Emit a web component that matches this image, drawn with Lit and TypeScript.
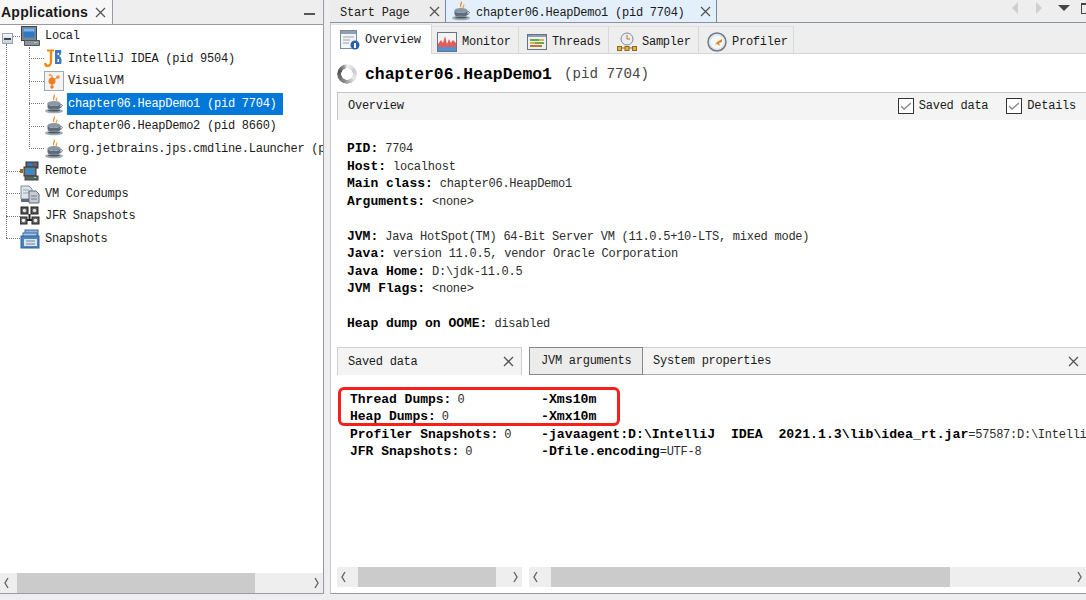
import { LitElement, html, svg, css } from 'lit';
import { customElement } from 'lit/decorators.js';

// Small 20x20 icons, drawn by hand
const cup = svg`
  <path d="M10 0c2.500 2.500-1 4 .5 7C7.500 5 10 3 10 0z" fill="#e8821e"/>
  <path d="M13 2.500c1 2.500-.5 3.500-.5 5.500-2-1.500 0-3.500.5-5.500z" fill="#f0a040"/>
  <ellipse cx="10" cy="9.500" rx="6.500" ry="2.400" fill="#8a97a6"/>
  <path d="M3.500 9.500v3.500c0 2 3 3 6.500 3s6.500-1 6.500-3V9.500c-1 2-3.500 2.500-6.500 2.500S4.500 11.500 3.500 9.500z" fill="#5f6b78"/>
  <path d="M16.500 10.500c2.500-.5 2.500 2.500-.5 3" fill="none" stroke="#5f6b78"/>
  <ellipse cx="10" cy="17" rx="9" ry="2.300" fill="#a0abb6"/>
  <ellipse cx="10" cy="16.500" rx="6" ry="1.100" fill="#4e5863"/>`;

const icons: Record<string, unknown> = {
  computer: svg`
    <rect x="1.500" y="0.500" width="15" height="14" fill="#7b8590" stroke="#3f454c"/>
    <rect x="3.500" y="2.500" width="11" height="9" fill="#2f78c4"/>
    <rect x="3.500" y="2.500" width="11" height="3" fill="#7fb2e6"/>
    <path d="M4.500 14.500h15v5h-15z" fill="#8b959f" stroke="#4f5660"/>
    <rect x="14" y="16" width="3" height="1" fill="#9fdc6a"/>`,
  idea: svg`
    <path d="M7 1v11c0 3-1.500 5-3 5S1 16 1.500 14" fill="none" stroke="#ee8a12" stroke-width="2.500"/>
    <path d="M3 1.500h7" stroke="#ee8a12" stroke-width="2"/>
    <path d="M11 1h6c1 2 0 5-2 6 3 1 3 5 2 8h-6V1z" fill="#3f78c8"/>
    <path d="M13.500 4h1.500v2h-1.500zM13.500 10h1.500v3h-1.500z" fill="#fff"/>`,
  visualvm: svg`
    <rect x="0.500" y="0.500" width="19" height="19" fill="#f3f3f3" stroke="#9fa9b5"/>
    <circle cx="8" cy="10" r="3.500" fill="#ef7d22"/>
    <circle cx="14" cy="6" r="1.800" fill="#f0944a"/>
    <circle cx="6" cy="4" r="1.300" fill="#f4a76a"/>
    <circle cx="8" cy="16" r="1.800" fill="#ef7d22"/>
    <path d="M8 10l6-4M8 10V4M8 10v6" stroke="#ef7d22"/>`,
  cup,
  remote: svg`
    <rect x="6" y="1" width="12" height="6" fill="#5a6672" stroke="#333"/>
    <rect x="8" y="2" width="4" height="3" fill="#2f78c4"/>
    <rect x="4" y="6" width="12" height="9" fill="#6f7a86" stroke="#333"/>
    <rect x="6" y="8" width="8" height="5" fill="#2f8fd0"/>
    <rect x="5" y="15" width="13" height="4" fill="#556666" stroke="#444"/>
    <rect x="14" y="16" width="2" height="1" fill="#9fdc6a"/>
    <rect x="0" y="8" width="3" height="4" fill="#a8651c"/>`,
  coredumps: svg`
    <path d="M1 2h8l3 3v10H1z" fill="#dfe4ea" stroke="#7f8b98"/>
    <path d="M3 6h6M3 9h6" stroke="#9aa5b1"/>
    <path d="M9 7h7l3 3v9H9z" fill="#c5ccd4" stroke="#5f6b78"/>
    <path d="M1 15h8v3H1z" fill="#5f6b78"/>
    <path d="M11 12h6M11 15h6" stroke="#6f7a86"/>`,
  jfr: svg`
    <rect x="1" y="1" width="7" height="7" fill="#555" stroke="#222"/>
    <circle cx="4.500" cy="4.500" r="1.800" fill="#ddd"/>
    <rect x="11" y="1" width="7" height="7" fill="#555" stroke="#222"/>
    <circle cx="14.500" cy="4.500" r="1.800" fill="#ddd"/>
    <rect x="0" y="11" width="7" height="7" fill="#666" stroke="#222"/>
    <circle cx="3.500" cy="14.500" r="1.800" fill="#eee"/>
    <rect x="12" y="11" width="7" height="7" fill="#666" stroke="#222"/>
    <circle cx="15.500" cy="14.500" r="1.800" fill="#eee"/>
    <path d="M7 14h5M9.500 8v6" stroke="#222" stroke-width="2"/>`,
  snapshots: svg`
    <rect x="5" y="1" width="13" height="10" fill="#8cb4de" stroke="#3b6aa0"/>
    <rect x="3" y="4" width="14" height="10" fill="#a7c6e8" stroke="#3b6aa0"/>
    <rect x="1" y="7" width="18" height="12" fill="#4b82c0" stroke="#2f5f98"/>
    <rect x="4" y="10" width="13" height="7" fill="#dbe6f1"/>
    <path d="M6 12h9M6 15h9" stroke="#6f8297"/>`,
  overview: svg`
    <rect x="0.500" y="0.500" width="16" height="18" fill="#f1f3f5" stroke="#7f8b98"/>
    <rect x="1" y="1" width="15" height="3" fill="#8d9fb4"/>
    <path d="M3 7h11M3 10h7M3 13h6" stroke="#98a4b2"/>
    <circle cx="15" cy="15" r="4.500" fill="#2862ae"/>
    <rect x="14" y="13" width="2" height="5" fill="#fff"/>`,
  monitor: svg`
    <rect x="0.500" y="0.500" width="19" height="19" fill="#f4f4f4" stroke="#69727d"/>
    <path d="M1 12l3-4 2 3 2-7 2 8 2-5 2 4 2-3 3 3v8H1z" fill="#e25d5d"/>
    <path d="M1 15h18v4H1z" fill="#4f93d6"/>`,
  threads: svg`
    <rect x="0.500" y="2.500" width="19" height="15" fill="#eef0f2" stroke="#69727d"/>
    <rect x="1" y="3" width="18" height="2" fill="#8d9fb4"/>
    <rect x="3" y="7" width="9" height="2" fill="#6aa84f"/>
    <rect x="12" y="7" width="5" height="2" fill="#e0b040"/>
    <rect x="3" y="10" width="5" height="2" fill="#e0b040"/>
    <rect x="8" y="10" width="9" height="2" fill="#6aa84f"/>
    <rect x="3" y="13" width="12" height="2" fill="#b5763a"/>`,
  sampler: svg`
    <circle cx="10" cy="7" r="6" fill="#e9edf1" stroke="#7f8b98"/>
    <path d="M10 3v4h3" fill="none" stroke="#c8741e"/>
    <rect x="0.500" y="14.500" width="4" height="4" fill="#e8b040" stroke="#8a6a20"/>
    <rect x="8" y="14.500" width="4" height="4" fill="#e8b040" stroke="#8a6a20"/>
    <rect x="15.500" y="14.500" width="4" height="4" fill="#e8b040" stroke="#8a6a20"/>
    <path d="M4 16h4M12 16h4" stroke="#8a6a20"/>`,
  profiler: svg`
    <circle cx="10" cy="10" r="9" fill="#dfe6ec" stroke="#6f7a86" stroke-width="1.500"/>
    <circle cx="10" cy="10" r="6.500" fill="#f7f8f9"/>
    <path d="M10 10l5-3v3l-3 1 1 3-3-2-2 1z" fill="#e8821e"/>`,
};

const icon = (name: string, size = 20) => html`
  <svg class="icon" width=${size} height=${size} viewBox="0 0 20 20">${icons[name]}</svg>`;

const closeX = html`
  <svg class="close" width="11" height="11" viewBox="0 0 11 11">
    <path d="M1 1l9 9M10 1l-9 9" stroke="#555" stroke-width="1.300" fill="none"/>
  </svg>`;

const check = html`
  <svg class="check" width="16" height="16" viewBox="0 0 16 16">
    <rect x="0.500" y="0.500" width="15" height="15" fill="#fff" stroke="#333"/>
    <path d="M3 8l3 3 7-6" fill="none" stroke="#888" stroke-width="1.300"/>
  </svg>`;

const chevron = (left: boolean) => html`
  <svg width="7" height="12" viewBox="0 0 7 12">
    <path d=${left ? 'M5 1L2 6l3 5' : 'M2 1l3 5-3 5'} fill="none" stroke="#666" stroke-width="1.400"/>
  </svg>`;

interface TreeRow { label: string; icon: string; level: number; selected?: boolean }

const treeRows: TreeRow[] = [
  { label: 'Local', icon: 'computer', level: 0 },
  { label: 'IntelliJ IDEA (pid 9504)', icon: 'idea', level: 1 },
  { label: 'VisualVM', icon: 'visualvm', level: 1 },
  { label: 'chapter06.HeapDemo1 (pid 7704)', icon: 'cup', level: 1, selected: true },
  { label: 'chapter06.HeapDemo2 (pid 8660)', icon: 'cup', level: 1 },
  { label: 'org.jetbrains.jps.cmdline.Launcher (p', icon: 'cup', level: 1 },
  { label: 'Remote', icon: 'remote', level: 0 },
  { label: 'VM Coredumps', icon: 'coredumps', level: 0 },
  { label: 'JFR Snapshots', icon: 'jfr', level: 0 },
  { label: 'Snapshots', icon: 'snapshots', level: 0 },
];

const subTabs = [
  { label: 'Overview', icon: 'overview', width: 101, pad: 9, active: true },
  { label: 'Monitor', icon: 'monitor', width: 87, pad: 5 },
  { label: 'Threads', icon: 'threads', width: 90, pad: 8 },
  { label: 'Sampler', icon: 'sampler', width: 90, pad: 8 },
  { label: 'Profiler', icon: 'profiler', width: 95, pad: 8 },
];

// [label, value]; an empty pair is a blank line
const details: [string, string][] = [
  ['PID:', '7704'],
  ['Host:', 'localhost'],
  ['Main class:', 'chapter06.HeapDemo1'],
  ['Arguments:', '<none>'],
  ['', ''],
  ['JVM:', 'Java HotSpot(TM) 64-Bit Server VM (11.0.5+10-LTS, mixed mode)'],
  ['Java:', 'version 11.0.5, vendor Oracle Corporation'],
  ['Java Home:', 'D:\\jdk-11.0.5'],
  ['JVM Flags:', '<none>'],
  ['', ''],
  ['Heap dump on OOME:', 'disabled'],
];

const savedData: [string, string][] = [
  ['Thread Dumps:', '0'],
  ['Heap Dumps:', '0'],
  ['Profiler Snapshots:', '0'],
  ['JFR Snapshots:', '0'],
];

const jvmArgs: [string, string][] = [
  ['-Xms10m', ''],
  ['-Xmx10m', ''],
  ['-javaagent:D:\\IntelliJ  IDEA  2021.1.3\\lib\\idea_rt.jar', '=57587:D:\\Intelli'],
  ['-Dfile.encoding', '=UTF-8'],
];

@customElement('app-root')
export class AppRoot extends LitElement {
  static styles = css`
    :host {
      display: grid;
      grid-template-columns: 324px 1fr;
      column-gap: 6px;
      height: 600px;
      width: 1086px;
      overflow: hidden;
      background: #eeeeee;
      color: #1a1a1a;
      font-family: 'Liberation Mono', monospace;
      font-size: 12px;
      letter-spacing: -0.25px;
    }
    svg { display: block; flex: none; }

    /* left panel */
    .left {
      height: 594px;
      display: flex;
      flex-direction: column;
      border-right: 1px solid #9a9aa6;
      border-bottom: 1px solid #9a9aa6;
      box-sizing: border-box;
      min-width: 0;
    }
    .left-head {
      height: 25px;
      flex: none;
      display: flex;
      align-items: center;
      box-sizing: border-box;
      border-bottom: 1px solid #9a9aa6;
    }
    .left-tab {
      width: 113px;
      height: 24px;
      box-sizing: border-box;
      display: flex;
      align-items: center;
      justify-content: space-between;
      padding: 0 6px 0 1px;
      background: #f7f7f7;
      border-right: 1px solid #9a9aa6;
      font: bold 14px 'Liberation Sans', sans-serif;
      letter-spacing: 0.25px;
    }
    .minimize { width: 11px; height: 2px; background: #555; margin: 3px 8px 0 auto; }
    .tree {
      flex: 1;
      position: relative;
      overflow: hidden;
      background: #fff;
    }
    .row { display: flex; align-items: center; height: 22.5px; }
    .row.l0 { padding-left: 6px; }
    .row.l1 { padding-left: 29px; }
    .stub { width: 14px; flex: none; border-top: 1px dotted #777; }
    .row.l1 .stub { width: 15px; }
    .row-label { margin-left: 5px; white-space: pre; }
    .row.l1 .row-label { margin-left: 3px; padding: 0 6px 0 1px; line-height: 22px; }
    .row-label.selected { background: #0078d7; color: #fff; }
    .expander {
      position: absolute;
      left: 2px;
      top: 8px;
      width: 9px;
      height: 9px;
      border: 1px solid #9aa3ad;
      background: linear-gradient(#f4f6f8, #c9d0d8);
      display: flex;
      align-items: center;
      justify-content: center;
    }
    .expander::before { content: ''; width: 7px; height: 2px; background: #3a4654; }
    .guide { position: absolute; border-left: 1px dotted #777; }
    .guide.outer { left: 6px; top: 19px; height: 194px; }
    .guide.inner { left: 29px; top: 22px; height: 102px; }

    /* scrollbars */
    .scrollbar {
      height: 20px;
      flex: none;
      display: flex;
      align-items: center;
      justify-content: space-between;
      position: relative;
      background: #eeeeee;
      padding: 0 3px;
    }
    .thumb { position: absolute; top: 0; bottom: 0; background: #cbcbcb; }

    /* right panel */
    .right {
      height: 594px;
      display: flex;
      flex-direction: column;
      min-width: 0;
    }
    .doc-tabs {
      height: 23px;
      flex: none;
      display: flex;
      border-bottom: 1px solid #8a92a0;
      box-sizing: border-box;
    }
    .doc-tab {
      display: flex;
      align-items: center;
      box-sizing: border-box;
      height: 22px;
      padding-left: 10px;
      gap: 5px;
      white-space: pre;
    }
    .doc-tab span { padding-top: 3px; }
    .doc-tab.start { width: 115px; background: #ececec; }
    .doc-tab.start .close { margin-left: auto; margin-right: 5px; }
    .doc-tab.current {
      width: 272px;
      padding-left: 5px;
      background: #e3f0fb;
      border-left: 1px solid #6f8ba8;
      border-right: 1px solid #6f8ba8;
    }
    .doc-tab.current .close { margin-left: auto; margin-right: 5px; }
    .doc-nav { margin-left: auto; display: flex; align-items: center; height: 14px; padding-top: 1px; }
    .arrow { width: 0; height: 0; border-style: solid; }
    .arrow.back { border-width: 6px 6px 6px 0; border-color: transparent #cfcfcf transparent transparent; margin-right: 18px; }
    .arrow.next { border-width: 6px 0 6px 6px; border-color: transparent transparent transparent #cfcfcf; margin-right: 16px; }
    .arrow.menu { border-width: 6px 6px 0 6px; border-color: #444 transparent transparent transparent; margin-right: 11px; }
    .restore { width: 9px; height: 8px; border: 1px solid #444; border-top-width: 2px; margin-right: -6px; }

    .sheet {
      flex: 1;
      min-height: 0;
      display: flex;
      flex-direction: column;
      background: #fff;
      border-left: 1px solid #c9c9c9;
      border-bottom: 1px solid #9a9aa6;
    }
    .sub-tabs {
      height: 31px;
      flex: none;
      display: flex;
      align-items: flex-end;
      background: #eeeeee;
      border-bottom: 1px solid #d4d4d4;
      box-sizing: border-box;
    }
    .sub-tab {
      height: 27px;
      box-sizing: border-box;
      display: flex;
      align-items: center;
      gap: 5px;
      border-right: 1px solid #d8d8d8;
      border-top: 1px solid #e2e2e2;
      padding-top: 3px;
    }
    .sub-tab.active {
      height: 30px;
      margin-bottom: -1px;
      background: #fff;
      padding-top: 0;
    }
    .sub-tab.active span { padding-top: 1px; }
    .title {
      height: 38px;
      flex: none;
      display: flex;
      align-items: center;
      padding: 2px 0 0 6px;
      box-sizing: border-box;
      gap: 8px;
      white-space: pre;
      letter-spacing: 0;
    }
    .spinner {
      width: 20px;
      height: 20px;
      border-radius: 50%;
      background: conic-gradient(#f4f4f4 0deg, #c8c8c8 70deg, #e8e8e8 120deg, #8a8a8a 200deg, #555 290deg, #9a9a9a 340deg, #f4f4f4 360deg);
      -webkit-mask: radial-gradient(circle, transparent 5.5px, #000 6px);
      mask: radial-gradient(circle, transparent 5.5px, #000 6px);
    }
    .title b { font-size: 16.4px; color: #000; }
    .title span { font-size: 14.2px; color: #444; margin-left: 4px; }
    .bar {
      height: 28px;
      flex: none;
      margin-left: 6px;
      display: flex;
      align-items: center;
      padding: 0 0 2px 10px;
      background: #f4f4f4;
      border-top: 1px solid #c4c4c4;
      border-left: 1px solid #c4c4c4;
      box-sizing: border-box;
      gap: 5px;
    }
    .bar .check:first-of-type { margin-left: auto; }
    .bar .gap { width: 8px; }
    .bar .end { width: 5px; }
    .details { padding: 20px 0 0 16px; flex: none; height: 227px; box-sizing: border-box; }
    .line { height: 17.5px; line-height: 17.5px; white-space: pre; color: #2c2c2c; }
    .line b { font-size: 13px; letter-spacing: 0; color: #000; margin-right: 7px; }

    .split {
      flex: 1;
      min-height: 0;
      display: grid;
      grid-template-columns: 185px 1fr;
      column-gap: 7px;
      padding: 0 0 6px 6px;
      position: relative;
    }
    .pane { display: flex; flex-direction: column; min-width: 0; }
    .pane-tabs { height: 28px; flex: none; display: flex; box-sizing: border-box; }
    .pane-tab {
      display: flex;
      align-items: center;
      box-sizing: border-box;
      padding-left: 10px;
      background: #f4f4f4;
      border: 1px solid #cfcfcf;
      border-bottom: none;
      white-space: pre;
    }
    .pane-tab.saved { flex: 1; }
    .pane-tab.saved .close, .pane-tab.props .close { margin-left: auto; margin-right: 7px; }
    .pane-tab.jvm { width: 114px; padding-left: 11px; background: #ececec; border-color: #888; border-bottom: 1px solid #888; }
    .pane-tab.props { flex: 1; border-left: none; border-right: none; padding-left: 10px; border-bottom: 1px solid #aaa; }
    .pane-body { flex: 1; min-height: 0; overflow: hidden; padding: 16px 0 0 13px; }
    .pane-body.args { padding-left: 12px; }
    .pane-body .line { height: 17.4px; line-height: 17.4px; }
    .pane-body .line b { margin-right: 6px; }
    .args .line b { font-size: 13.2px; margin-right: 0; }
    .highlight {
      position: absolute;
      left: 7px;
      top: 40px;
      width: 282px;
      height: 39px;
      box-sizing: border-box;
      border: 3px solid #f5201c;
      border-radius: 6px;
    }
  `;

  private scrollbar(thumbLeft: number, thumbWidth: number) {
    return html`<div class="scrollbar">
      ${chevron(true)}
      <div class="thumb" style="left:${thumbLeft}px;width:${thumbWidth}px"></div>
      ${chevron(false)}
    </div>`;
  }

  private renderTree() {
    return html`<div class="tree">
      <div class="guide outer"></div>
      <div class="guide inner"></div>
      <div class="expander"></div>
      ${treeRows.map(
        (r) => html`<div class="row l${r.level}">
          <span class="stub"></span>
          ${icon(r.icon)}
          <span class="row-label ${r.selected ? 'selected' : ''}">${r.label}</span>
        </div>`
      )}
    </div>`;
  }

  private renderLines(rows: [string, string][]) {
    return rows.map(
      ([k, v]) => html`<div class="line">${k ? html`<b>${k}</b>${v}` : ''}</div>`
    );
  }

  render() {
    return html`
      <section class="left">
        <div class="left-head">
          <div class="left-tab">Applications ${closeX}</div>
          <div class="minimize"></div>
        </div>
        ${this.renderTree()}
        ${this.scrollbar(17, 238)}
      </section>

      <section class="right">
        <div class="doc-tabs">
          <div class="doc-tab start"><span>Start Page</span>${closeX}</div>
          <div class="doc-tab current">
            ${icon('cup')}<span>chapter06.HeapDemo1 (pid 7704)</span>${closeX}
          </div>
          <div class="doc-nav">
            <span class="arrow back"></span>
            <span class="arrow next"></span>
            <span class="arrow menu"></span>
            <span class="restore"></span>
          </div>
        </div>
        <div class="sheet">
          <div class="sub-tabs">
            ${subTabs.map(
              (t) => html`<div class="sub-tab ${t.active ? 'active' : ''}"
                style="width:${t.width}px;padding-left:${t.pad}px">
                ${icon(t.icon)}<span>${t.label}</span>
              </div>`
            )}
          </div>
          <div class="title">
            <div class="spinner"></div>
            <b>chapter06.HeapDemo1</b><span>(pid 7704)</span>
          </div>
          <div class="bar">
            Overview
            ${check}<span>Saved data</span><span class="gap"></span>
            ${check}<span>Details</span><span class="end"></span>
          </div>
          <div class="details">${this.renderLines(details)}</div>
          <div class="split">
            <div class="pane">
              <div class="pane-tabs">
                <div class="pane-tab saved"><span>Saved data</span>${closeX}</div>
              </div>
              <div class="pane-body">${this.renderLines(savedData)}</div>
              ${this.scrollbar(21, 138)}
            </div>
            <div class="pane">
              <div class="pane-tabs">
                <div class="pane-tab jvm">JVM arguments</div>
                <div class="pane-tab props"><span>System properties</span>${closeX}</div>
              </div>
              <div class="pane-body args">${this.renderLines(jvmArgs)}</div>
              ${this.scrollbar(22, 399)}
            </div>
            <div class="highlight"></div>
          </div>
        </div>
      </section>
    `;
  }
}
